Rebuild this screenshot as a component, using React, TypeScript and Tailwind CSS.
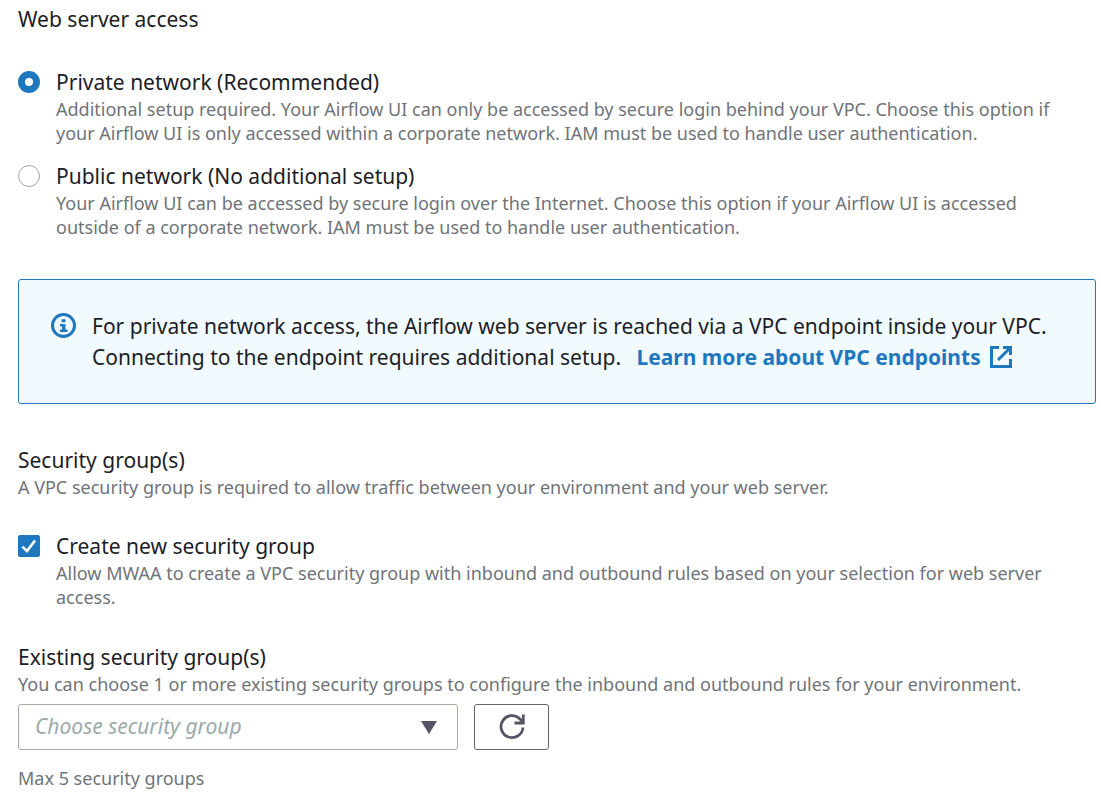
import React, { useId, useState } from "react";

type ChoiceProps = {
  type: "radio" | "checkbox";
  name: string;
  label: string;
  hint: string;
  checked: boolean;
  onChange: (checked: boolean) => void;
};

function Choice({ type, name, label, hint, checked, onChange }: ChoiceProps) {
  const id = useId();
  const round = type === "radio";
  return (
    <div className="flex gap-4">
      <span className="mt-1 grid size-[22px] shrink-0">
        <input
          id={id}
          type={type}
          name={name}
          checked={checked}
          onChange={(e) => onChange(e.target.checked)}
          aria-describedby={id + "-hint"}
          className={
            round
              ? "col-start-1 row-start-1 size-[22px] appearance-none rounded-full border border-[#a2a6a8] bg-white checked:border-[7px] checked:border-[#1f77be]"
              : "col-start-1 row-start-1 size-[22px] appearance-none rounded-xs border border-[#a2a6a8] bg-white checked:border-[#1f77be] checked:bg-[#1f77be]"
          }
        />
        {!round && checked && (
          <svg viewBox="0 0 22 22" className="pointer-events-none col-start-1 row-start-1 size-[22px]" fill="none" stroke="white" strokeWidth="2.6" aria-hidden="true">
            <path d="M4.300 11.600 9 16 17 5.500" />
          </svg>
        )}
      </span>
      <div className="min-w-0 flex-1">
        <label htmlFor={id} className="block text-[21px] leading-[30px]">{label}</label>
        <p id={id + "-hint"} className="text-[18px] leading-6 text-[#6f7479]">{hint}</p>
      </div>
    </div>
  );
}

export default function App() {
  const [access, setAccess] = useState("private");
  const [create, setCreate] = useState(true);

  return (
    <main className="bg-white pt-1 pr-[5px] pb-1 pl-[18px] font-['Noto_Sans',sans-serif] text-[#1c1d26]">
      <fieldset>
        <legend className="text-[21px] leading-[30px]">Web server access</legend>
        <div className="flex flex-col gap-4 pt-[33px] pr-4">
          <Choice
            type="radio"
            name="access"
            label="Private network (Recommended)"
            hint="Additional setup required. Your Airflow UI can only be accessed by secure login behind your VPC. Choose this option if your Airflow UI is only accessed within a corporate network. IAM must be used to handle user authentication."
            checked={access === "private"}
            onChange={() => setAccess("private")}
          />
          <Choice
            type="radio"
            name="access"
            label="Public network (No additional setup)"
            hint="Your Airflow UI can be accessed by secure login over the Internet. Choose this option if your Airflow UI is accessed outside of a corporate network. IAM must be used to handle user authentication."
            checked={access === "public"}
            onChange={() => setAccess("public")}
          />
        </div>
      </fieldset>

      <aside className="mt-10 flex gap-4 rounded-[3px] border border-[#1f77be] bg-[#f1faff] pt-[31px] pr-8 pb-[30px] pl-[31px]">
        <svg viewBox="0 0 26 26" className="mt-[2px] size-[26px] shrink-0 text-[#1f77be]" aria-hidden="true">
          <circle cx="13.500" cy="12.500" r="11" fill="none" stroke="currentColor" strokeWidth="3" />
          <path fill="currentColor" d="M11.500 6.300h4v3h-4zM10 11h5.500v5.500h2V19H10v-2.500h2V13.500h-2z" />
        </svg>
        <p className="min-w-0 flex-1 text-[21px] leading-[31px]">
          For private network access, the Airflow web server is reached via a VPC endpoint inside your VPC. Connecting to the endpoint requires additional setup.{" "}
          <a href="#vpc-endpoints" className="ml-[10px] inline-block font-bold text-[#1f77be]">
            Learn more about VPC endpoints
            <svg viewBox="0 0 24 24" className="ml-2 inline size-6 align-[-4px]" fill="none" stroke="currentColor" strokeWidth="3" aria-hidden="true">
              <path d="M10 2.500H2.500v19h19V14M14 2.500h7.500V10M21.500 2.500 9 15" />
            </svg>
          </a>
        </p>
      </aside>

      <section className="mt-[41px]">
        <h2 className="text-[21px] leading-[30px]">Security group(s)</h2>
        <p className="text-[18px] leading-6 text-[#6f7479]">
          A VPC security group is required to allow traffic between your environment and your web server.
        </p>
        <div className="mt-8 pr-4">
          <Choice
            type="checkbox"
            name="create"
            label="Create new security group"
            hint="Allow MWAA to create a VPC security group with inbound and outbound rules based on your selection for web server access."
            checked={create}
            onChange={setCreate}
          />
        </div>
      </section>

      <section className="mt-[33px]">
        <label htmlFor="existing" className="block text-[21px] leading-[30px]">Existing security group(s)</label>
        <p className="text-[18px] leading-6 text-[#6f7479]">
          You can choose 1 or more existing security groups to configure the inbound and outbound rules for your environment.
        </p>
        <div className="mt-2 flex gap-4">
          <div className="grid w-[440px] items-center">
            <select
              id="existing"
              defaultValue=""
              className="col-start-1 row-start-1 h-[46px] w-full appearance-none rounded-[3px] border border-[#b0a8a2] bg-white px-4 text-[21px] text-[#9caaa9] italic"
            >
              <option value="">Choose security group</option>
            </select>
            <svg viewBox="0 0 16 13" className="pointer-events-none col-start-1 row-start-1 mr-[21px] h-[13px] w-4 justify-self-end" fill="#545464" aria-hidden="true">
              <path d="M0 0h16L8 13z" />
            </svg>
          </div>
          <button type="button" aria-label="Refresh" className="grid h-[46px] w-[75px] place-items-center rounded-[3px] border border-[#62626f] bg-white text-[#545464]">
            <svg viewBox="0 0 26 26" className="size-[26px]" fill="none" stroke="currentColor" strokeWidth="2.800" aria-hidden="true">
              <path d="M24 13.500A11 11 0 1 1 21 5L24 8" />
              <path d="M24.300 .5v8.500h-8.800" />
            </svg>
          </button>
        </div>
        <p className="mt-4 text-[18px] leading-6 text-[#6f7479]">Max 5 security groups</p>
      </section>
    </main>
  );
}
